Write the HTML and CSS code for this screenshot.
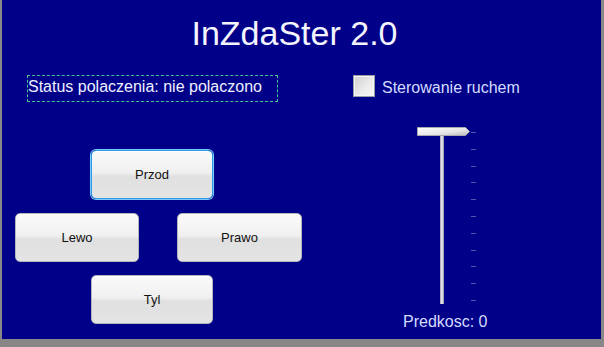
FILE: index.html
```html
<!DOCTYPE html>
<html lang="pl">
<head>
<meta charset="utf-8">
<title>InZdaSter 2.0</title>
<link rel="stylesheet" href="styles.css">
</head>
<body>
<div class="screen">
  <h1 class="title">InZdaSter 2.0</h1>
  <div class="content">
    <div class="left">
      <div class="status">Status polaczenia: nie polaczono</div>
      <div class="pad">
        <button class="btn btn-up focused">Przod</button>
        <button class="btn btn-left">Lewo</button>
        <button class="btn btn-right">Prawo</button>
        <button class="btn btn-down">Tyl</button>
      </div>
    </div>
    <div class="right">
      <label class="check">
        <span class="check-box"></span>
        <span class="check-label">Sterowanie ruchem</span>
      </label>
      <div class="slider">
        <svg class="thumb" width="54" height="10" viewBox="0 0 54 10">
          <defs>
            <linearGradient id="tg" x1="0" y1="0" x2="1" y2="1">
              <stop offset="0" stop-color="#ffffff"/>
              <stop offset="0.6" stop-color="#e6e6e6"/>
              <stop offset="1" stop-color="#b8b8b8"/>
            </linearGradient>
          </defs>
          <path d="M0.5 0.5 H48.5 L52.5 4.5 L48.5 8.5 H0.5 Z" fill="url(#tg)" stroke="#a8a8b0" stroke-width="1"/>
        </svg>
        <div class="track"></div>
        <div class="ticks">
          <span></span><span></span><span></span><span></span><span></span><span></span>
          <span></span><span></span><span></span><span></span><span></span>
        </div>
      </div>
      <div class="speed">Predkosc: 0</div>
    </div>
  </div>
</div>
</body>
</html>
```

FILE: styles.css
```css
html, body {
  margin: 0;
  padding: 0;
}
body {
  width: 604px;
  height: 347px;
  background: #878787;
  font-family: "Liberation Sans", Arial, sans-serif;
  overflow: hidden;
}
.screen {
  margin-left: 2px;
  width: 599px;
  height: 339px;
  background: #000088;
  display: flex;
  flex-direction: column;
}
.title {
  margin: 0;
  padding: 16px 14px 0 0;
  font-size: 34px;
  line-height: 34px;
  font-weight: normal;
  color: #f4f4ff;
  text-align: center;
}
.content {
  display: flex;
  margin-top: 25px;
}
.left {
  width: 340px;
  padding-left: 13px;
  box-sizing: border-box;
}
.status {
  margin-left: 12px;
  width: 251px;
  height: 27px;
  box-sizing: border-box;
  border: 1px dashed #44c48e;
  padding: 2px 0 0 0;
  font-size: 16px;
  line-height: 18px;
  color: #eef0ff;
  white-space: nowrap;
}
.pad {
  margin-top: 48px;
  display: grid;
  grid-template-columns: 76px 48px 38px 36px 89px;
  grid-template-rows: 49px 49px 49px;
  row-gap: 13.5px;
}
.btn {
  font-family: "Liberation Sans", Arial, sans-serif;
  font-size: 13px;
  color: #111;
  border: 1px solid #b4b4bc;
  border-radius: 5px;
  background: linear-gradient(#fafafa 0%, #f0f0f0 46%, #e0e0e0 54%, #e4e4e4 100%);
  box-shadow: inset 0 1px 0 #ffffff;
  padding: 0;
  margin: 0;
}
.btn-up { grid-column: 2 / 5; grid-row: 1; }
.btn-left { grid-column: 1 / 3; grid-row: 2; }
.btn-right { grid-column: 4 / 6; grid-row: 2; }
.btn-down { grid-column: 2 / 5; grid-row: 3; }
.focused {
  border: 1px solid #2f9ae6;
  box-shadow: 0 0 0 1px #7ccaf8, inset 0 1px 0 #ffffff;
}
.right {
  flex: 1;
  padding-left: 11px;
}
.check {
  display: flex;
  align-items: flex-start;
  gap: 7px;
}
.check-box {
  width: 22px;
  height: 22px;
  box-sizing: border-box;
  border: 1px solid #9a9aa2;
  box-shadow: inset 0 0 0 1px #f6f6f6;
  background: linear-gradient(135deg, #cfcfcf 0%, #ececec 60%, #f6f6f6 100%);
}
.check-label {
  padding-top: 4px;
  font-size: 16px;
  line-height: 18px;
  color: #d4dcff;
  white-space: nowrap;
}
.slider {
  position: relative;
  margin-top: 30px;
  margin-left: 64px;
  width: 60px;
  height: 177px;
  display: flex;
  align-items: flex-start;
}
.thumb {
  position: absolute;
  left: 0;
  top: 0;
}
.track {
  margin-left: 23px;
  margin-top: 8px;
  width: 4px;
  height: 169px;
  background: linear-gradient(90deg, #9898a8, #eeeef6 45%, #c4c4d0 75%, #8c8c9c);
}
.ticks {
  margin-left: 27px;
  margin-top: 5px;
  height: 169px;
  display: flex;
  flex-direction: column;
  justify-content: space-between;
}
.ticks span {
  display: block;
  width: 5px;
  height: 1px;
  background: #4a58a8;
}
.speed {
  margin-top: 9px;
  margin-left: 50px;
  font-size: 16px;
  line-height: 18px;
  color: #d4dcff;
}
```
